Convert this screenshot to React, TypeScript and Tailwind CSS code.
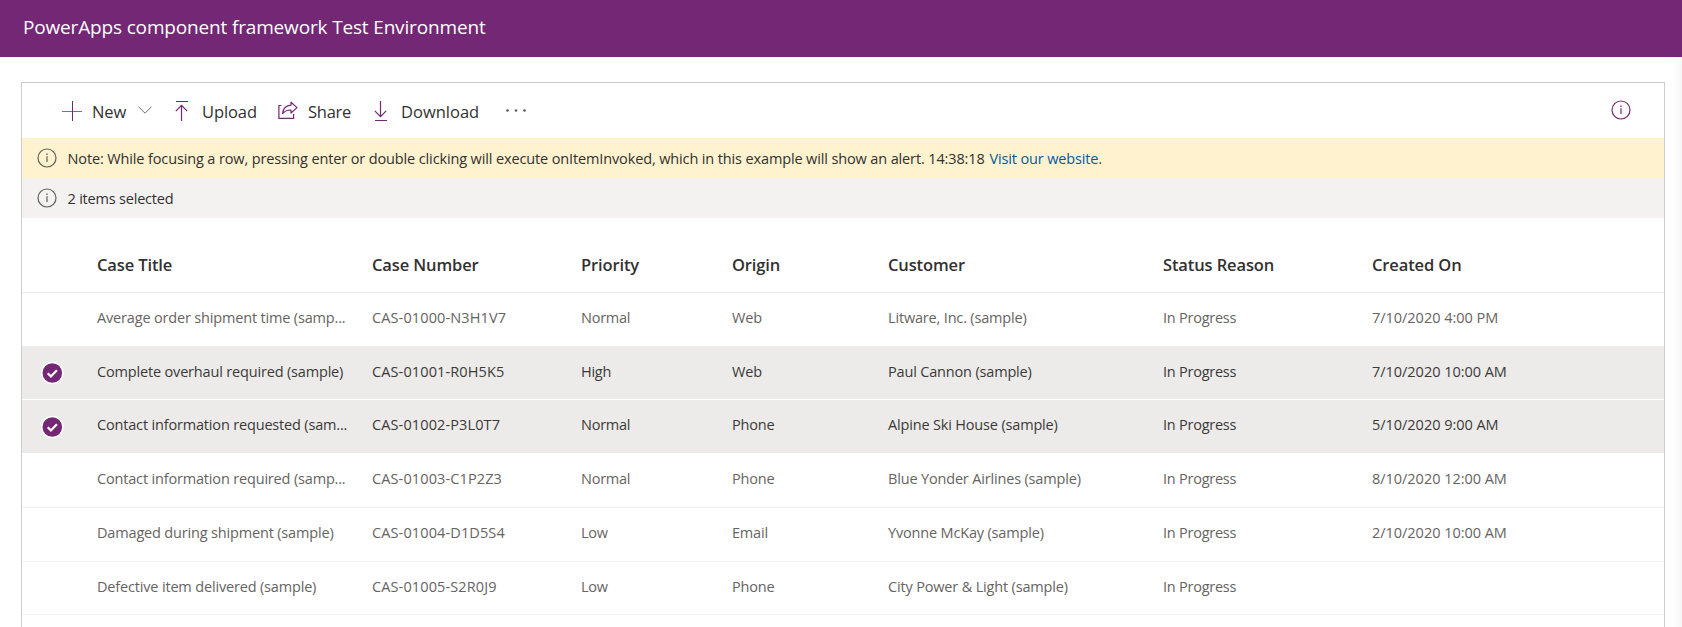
type Row = {
  cells: string[];
  selected?: boolean;
  height: string;
};

const COLUMNS = [
  { label: "Case Title", width: "w-[275px]", tracking: "tracking-[-0.17px]" },
  { label: "Case Number", width: "w-[209px]", tracking: "tracking-[0.12px]" },
  { label: "Priority", width: "w-[151px]", tracking: "tracking-[-0.25px]" },
  { label: "Origin", width: "w-[156px]", tracking: "tracking-[-0.2px]" },
  { label: "Customer", width: "w-[275px]", tracking: "tracking-[-0.17px]" },
  { label: "Status Reason", width: "w-[209px]", tracking: "tracking-[-0.24px]" },
  { label: "Created On", width: "w-[209px]", tracking: "tracking-[-0.03px]" },
];

const ROWS: Row[] = [
  {
    cells: ["Average order shipment time (samp...", "CAS-01000-N3H1V7", "Normal", "Web", "Litware, Inc. (sample)", "In Progress", "7/10/2020 4:00 PM"],
    height: "h-[54px]",
  },
  {
    cells: ["Complete overhaul required (sample)", "CAS-01001-R0H5K5", "High", "Web", "Paul Cannon (sample)", "In Progress", "7/10/2020 10:00 AM"],
    selected: true,
    height: "h-[53px]",
  },
  {
    cells: ["Contact information requested (sam...", "CAS-01002-P3L0T7", "Normal", "Phone", "Alpine Ski House (sample)", "In Progress", "5/10/2020 9:00 AM"],
    selected: true,
    height: "h-[54px]",
  },
  {
    cells: ["Contact information required (samp...", "CAS-01003-C1P2Z3", "Normal", "Phone", "Blue Yonder Airlines (sample)", "In Progress", "8/10/2020 12:00 AM"],
    height: "h-[54px]",
  },
  {
    cells: ["Damaged during shipment (sample)", "CAS-01004-D1D5S4", "Low", "Email", "Yvonne McKay (sample)", "In Progress", "2/10/2020 10:00 AM"],
    height: "h-[54px]",
  },
  {
    cells: ["Defective item delivered (sample)", "CAS-01005-S2R0J9", "Low", "Phone", "City Power & Light (sample)", "In Progress", ""],
    height: "h-[53px]",
  },
];

function InfoIcon({ className }: { className: string }) {
  return (
    <svg className={`size-5 shrink-0 ${className}`} viewBox="0 0 20 20" fill="none" stroke="currentColor">
      <circle cx="10" cy="10" r="9" strokeWidth="1.2" />
      <path d="M10 8.3V14" strokeWidth="1.2" />
      <path d="M10 5.6V7" strokeWidth="1.3" />
    </svg>
  );
}

function PlusIcon() {
  return (
    <svg className="size-5 shrink-0" viewBox="0 0 20 20" fill="none" stroke="#742774">
      <path d="M0 10.5H20" strokeWidth="1" strokeOpacity="0.75" />
      <path d="M10.5 0V20" strokeWidth="1" />
    </svg>
  );
}

function ChevronIcon() {
  return (
    <svg className="h-5 w-[14px] shrink-0" viewBox="0 0 14 20" fill="none" stroke="#605e5c">
      <path d="M0.4 5.6L7 12.2L13.6 5.6" strokeWidth="0.9" />
    </svg>
  );
}

function UploadIcon() {
  return (
    <svg className="h-5 w-[14px] shrink-0" viewBox="0 0 14 20" fill="none" stroke="#742774">
      <path d="M1 0.5H13" strokeWidth="1.1" />
      <path d="M6.5 20V4.4M0.8 10.1L6.5 4.4L12.2 10.1" strokeWidth="1.2" />
    </svg>
  );
}

function DownloadIcon() {
  return (
    <svg className="h-5 w-[14px] shrink-0" viewBox="0 0 14 20" fill="none" stroke="#742774">
      <path d="M1 19.5H13" strokeWidth="1.1" />
      <path d="M6.5 0V15.6M0.8 9.9L6.5 15.6L12.2 9.9" strokeWidth="1.2" />
    </svg>
  );
}

function ShareIcon() {
  return (
    <svg className="size-5 shrink-0" viewBox="0 0 20 20" fill="none" stroke="#742774" strokeWidth="1.2">
      <path d="M3.4 4.5H0.9V17.4H15.6V13" />
      <path d="M13 1.2L19 6.6L13 12V9C9 8.9 6.8 9.8 4.6 12.6C5 8.2 7.8 4.6 13 4.2Z" strokeLinejoin="round" />
    </svg>
  );
}

function CheckBadge() {
  return (
    <svg className="size-6 shrink-0" viewBox="0 0 24 24" fill="none">
      <circle cx="12.3" cy="12" r="11.3" fill="#fff" />
      <circle cx="12.3" cy="12" r="9.8" fill="#742774" />
      <path d="M7.7 12.3L10.9 15.4L16.9 9.2" stroke="#fff" strokeWidth="2.2" />
    </svg>
  );
}

export default function App() {
  return (
    <div className="flex h-[627px] w-full flex-col overflow-hidden bg-white font-['Open_Sans','Noto_Sans',sans-serif]">
      <header className="flex h-[57px] shrink-0 items-center bg-[#742774] pl-[23px] pb-0.5">
        <h1 className="text-[19px] tracking-[-0.16px] text-white">PowerApps component framework Test Environment</h1>
      </header>

      <div className="flex min-h-0 flex-1">
        <main className="mt-[25px] ml-[21px] flex w-[1644px] shrink-0 flex-col border border-b-0 border-[#cccccc]">
          <div className="flex h-[55px] shrink-0 items-center pl-10 text-[16.5px] tracking-[-0.1px] text-[#323130]">
            <button className="flex w-[113px] items-center">
              <PlusIcon />
              <span className="ml-[10px] w-[46px] pt-1 text-left">New</span>
              <ChevronIcon />
            </button>
            <button className="flex w-[103px] items-center">
              <UploadIcon />
              <span className="ml-[13px] pt-1">Upload</span>
            </button>
            <button className="flex w-[96px] items-center">
              <ShareIcon />
              <span className="ml-[10px] pt-1 tracking-[-0.25px]">Share</span>
            </button>
            <button className="flex w-[132px] items-center">
              <DownloadIcon />
              <span className="ml-[13px] pt-1 tracking-normal">Download</span>
            </button>
            <svg className="mb-0.5 h-1 w-5" viewBox="0 0 20 4" fill="#605e5c">
              <circle cx="1.5" cy="2.5" r="1.3" />
              <circle cx="10" cy="2.5" r="1.3" />
              <circle cx="18.5" cy="2.5" r="1.3" />
            </svg>
            <InfoIcon className="mr-[33px] mb-[2px] ml-auto text-[#742774]" />
          </div>

          <div className="flex h-10 shrink-0 items-center bg-[#fff2cf] pl-[15px] text-[14.5px] text-[#323130]">
            <InfoIcon className="mb-px text-[#605e5c]" />
            <p className="ml-[10.5px] pt-0.5 tracking-[-0.13px] whitespace-nowrap">
              Note: While focusing a row, pressing enter or double clicking will execute onItemInvoked, which in this example will show an alert. 14:38:18
            </p>
            <a className="ml-[5px] pt-0.5 tracking-[-0.15px] whitespace-nowrap text-[#005a9e]">Visit our website.</a>
          </div>
          <div className="flex h-10 shrink-0 items-center bg-[#f3f2f1] pl-[15px] text-[14.5px] text-[#323130]">
            <InfoIcon className="mb-px text-[#605e5c]" />
            <p className="ml-[10.5px] pt-0.5 tracking-[-0.2px]">2 items selected</p>
          </div>

          <div className="flex h-[75px] shrink-0 items-center border-b border-[#e8e8e8] pt-5 pl-[75px] text-[16.5px] font-semibold tracking-[-0.12px] text-[#323130]">
            {COLUMNS.map((column) => (
              <div key={column.label} className={`shrink-0 whitespace-nowrap ${column.width}`}>
                {column.label}
              </div>
            ))}
          </div>

          {ROWS.map((row) => (
            <div
              key={row.cells[1]}
              className={`flex shrink-0 items-center border-b text-[14.5px] ${row.height} ${
                row.selected ? "border-white bg-[#ecebe9] text-[#3b3a39]" : "border-[#f0f0f0] text-[#666462]"
              }`}
            >
              <div className="flex w-[75px] shrink-0 pl-[18px]">{row.selected && <CheckBadge />}</div>
              {COLUMNS.map((column, index) => (
                <div key={column.label} className={`shrink-0 pb-[3px] whitespace-nowrap ${column.width} ${column.tracking}`}>
                  {row.cells[index]}
                </div>
              ))}
            </div>
          ))}
        </main>
        <div className="ml-auto w-2.5 bg-linear-to-r from-white to-[#f7f7f7]" />
      </div>
    </div>
  );
}
